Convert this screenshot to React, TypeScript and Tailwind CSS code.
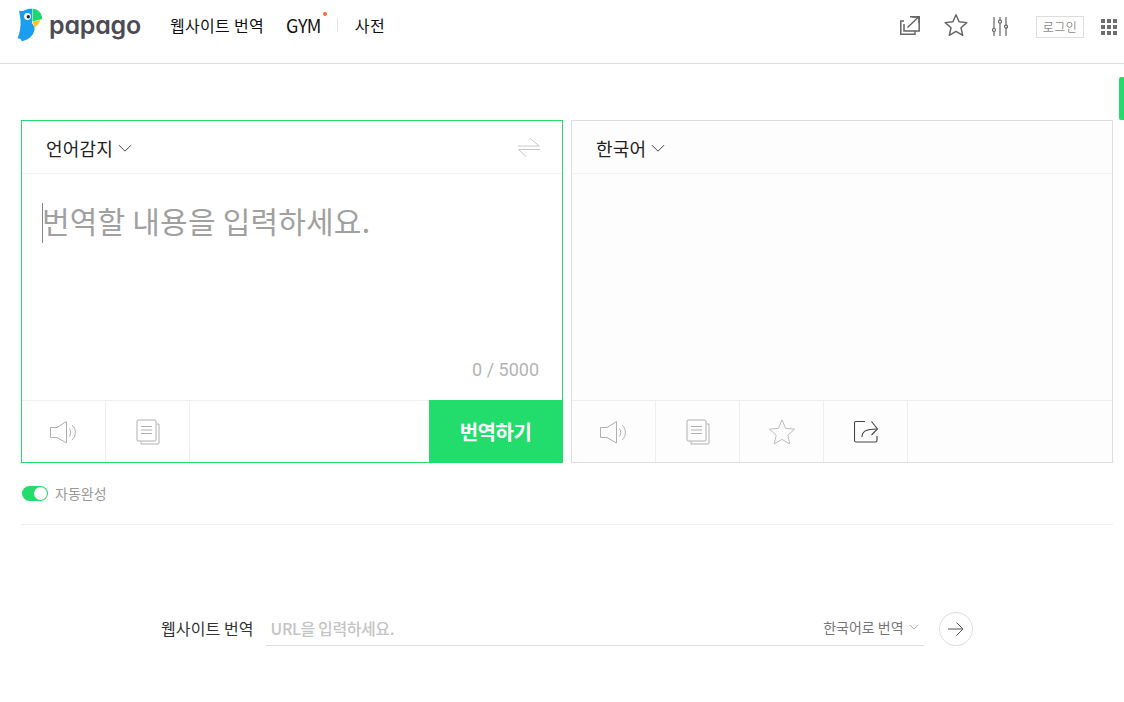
import React from 'react';

const KR = 'font-["Noto_Sans_CJK_KR","Noto_Sans",sans-serif]';

const Logo = () => (
  <svg width="26" height="34" viewBox="0 0 26 34" className="shrink-0">
    <path d="M7 2.5 C9.5 1 13 0.6 15 0.8 L15 15 L17.5 19 C18 26 13 31.5 4.5 33.5 C5 31.5 3.5 30 0.5 30.5 C3 24 4 18 3.5 12 C3 9 2.5 5 2 2.5 C3.5 3.3 5.5 3.3 7 2.5 Z" fill="#1b9df0" />
    <path d="M15.5 0.8 C21 1 25 5 25.2 11 L15.5 13.5 Z" fill="#1fd66f" />
    <path d="M15.5 13.8 L23.5 12 C22.5 15 20 18 17.5 19.5 Z" fill="#fcc419" />
    <circle cx="10.5" cy="8.5" r="3.4" fill="#fff" />
    <circle cx="11.3" cy="8.7" r="1.7" fill="#1d2a3a" />
  </svg>
);

const Speaker = () => (
  <svg width="30" height="26" viewBox="0 0 30 26" fill="none" stroke="#b0b0b0" strokeWidth="1">
    <path d="M1.5 8.5 H8 L17.5 2.5 V24 L8 18.5 H1.5 Z" />
    <path d="M20.5 9.5 C22 11.5 22 15.5 20.5 17.5" />
    <path d="M23 6 C27.5 9.5 27.5 17.5 23 21" />
  </svg>
);

const Copy = () => (
  <svg width="24" height="26" viewBox="0 0 24 26" fill="none" stroke="#b0b0b0" strokeWidth="1">
    <rect x="1" y="1" width="19" height="21" rx="1" />
    <path d="M20.5 5 H23 V24 A1 1 0 0 1 22 25 H5 V22.5" />
    <path d="M5 7.5 H16 M5 11 H16 M5 14.5 H16" />
  </svg>
);

const Star = ({ color = '#bdbdbd', size = 28, width = 1 }: { color?: string; size?: number; width?: number }) => (
  <svg width={size} height={size} viewBox="0 0 28 28" fill="none" stroke={color} strokeWidth={width} strokeLinejoin="round">
    <path d="M14 2 L17.6 10.3 L26.6 11.2 L19.8 17.2 L21.8 26 L14 21.4 L6.2 26 L8.2 17.2 L1.4 11.2 L10.4 10.3 Z" />
  </svg>
);

const Share = () => (
  <svg className="ml-[1px]" width="24" height="23" viewBox="0 0 24 23" fill="none" stroke="#444" strokeWidth="1.1">
    <path d="M11 1.5 H2 A1.5 1.5 0 0 0 0.5 3 V20.5 A1.5 1.5 0 0 0 2 22 H21.5 A1.5 1.5 0 0 0 23 20.5 V16" />
    <path d="M8 17 C8 12 11 9 23 9" />
    <path d="M17.5 1.5 L23.5 9 L17.5 15" />
  </svg>
);

const Chevron = ({ w = 14, color = '#444' }: { w?: number; color?: string }) => (
  <svg width={w} height={w * 0.6} viewBox="0 0 14 8" fill="none" stroke={color} strokeWidth="1">
    <path d="M1 1 L7 7 L13 1" />
  </svg>
);

const ActionCell = ({ children }: { children: React.ReactNode }) => (
  <div className="flex h-full w-[84px] items-center justify-center border-r border-[#eeeeee]">{children}</div>
);

export default function App() {
  return (
    <div className={`relative h-[702px] w-[1124px] overflow-hidden bg-white ${KR}`}>
      {/* Header */}
      <header className="flex h-[64px] items-center border-b border-[#dddddd] pb-[13px] pl-[17px] pr-[7px]">
        <Logo />
        <span className="ml-[6px] font-['Inter',sans-serif] text-[25px] font-semibold leading-none tracking-[-0.2px] text-[#4b4b55] [font-feature-settings:'cv11']">papago</span>
        <nav className="ml-[29px] flex items-center text-[16px] tracking-[0.3px] text-[#111111]">
          <span>웹사이트 번역</span>
          <span className="relative ml-[22px] text-[18px] leading-[24px] tracking-[-0.6px]">
            GYM
            <i className="absolute right-[-6px] top-[-1px] h-[4px] w-[4px] rounded-full bg-[#ff6b3d]" />
          </span>
          <i className="ml-[16px] h-[14px] w-px bg-[#e5e5e5]" />
          <span className="ml-[17px] text-[16px]">사전</span>
        </nav>
        <div className="ml-auto flex items-center">
          <svg width="20" height="19" viewBox="0 0 20 19" fill="none" stroke="#666" strokeWidth="1.5">
            <path d="M4 5 H0.8 V18.2 H15 V15" />
            <path d="M4 8 V15 H19.2 V0.8 H10" />
            <path d="M7.5 11.5 L18 1.5 M12.5 1 H19 V7" />
          </svg>
          <div className="ml-[24px]">
            <Star color="#666" size={24} width={1.7} />
          </div>
          <svg className="ml-[24px] mt-[2px]" width="16" height="19" viewBox="0 0 16 19" fill="none" stroke="#666" strokeWidth="1.2">
            <path d="M2 0 V19 M8 0 V19 M14 0 V19" />
            <circle cx="2" cy="13" r="1.5" fill="#fff" />
            <circle cx="8" cy="4.7" r="1.5" fill="#fff" />
            <circle cx="14" cy="9.6" r="1.5" fill="#fff" />
          </svg>
          <span className="ml-[28px] mt-[4px] flex h-[22px] w-[48px] items-center justify-center border border-[#dddddd] text-[12px] font-light leading-none tracking-[0.5px] text-[#555555]">로그인</span>
          <div className="ml-[17px] mt-[4px] grid grid-cols-3 gap-[2px]">
            {Array.from({ length: 9 }).map((_, i) => (
              <i key={i} className="h-[4px] w-[4px] bg-[#6f6f6f]" />
            ))}
          </div>
        </div>
      </header>

      {/* Scroll indicator */}
      <div className="absolute right-0 top-[77px] h-[43px] w-[5px] rounded-l-[2px] bg-[#22dd6c]" />

      <main className="px-[21px] pr-[11px] pt-[56px]">
        <div className="flex gap-[8px]">
          {/* Source panel */}
          <section className="flex h-[343px] w-[542px] flex-col border border-[#22dd6c] bg-white">
            <div className="flex h-[53px] items-center justify-between border-b border-[#f3f3f3] pl-[24px] pr-[22px]">
              <div className="flex items-center gap-[5px] pt-[3px] text-[18px] tracking-[0.2px] text-[#222222]">
                언어감지
                <Chevron />
              </div>
              <svg width="22" height="19" viewBox="0 0 22 19" fill="none" stroke="#c8c8c8" strokeWidth="1">
                <path d="M0 8 H21.5 L12 0.5" />
                <path d="M22 11.5 H0.5 L8 18.5" />
              </svg>
            </div>
            <div className="relative flex-1">
              <i className="absolute left-[20px] top-[29px] h-[40px] w-px bg-[#888888]" />
              <p className="pl-[20px] pt-[25px] text-[30px] leading-[42px] tracking-[0.2px] text-[#a0a0a0]">번역할 내용을 입력하세요.</p>
              <span className="absolute bottom-[21px] right-[23px] font-['Roboto',sans-serif] text-[18px] leading-none text-[#b4b4b4]">0 / 5000</span>
            </div>
            <div className="flex h-[62px] border-t border-[#f0f0f0]">
              <ActionCell><Speaker /></ActionCell>
              <ActionCell><Copy /></ActionCell>
              <button className="ml-auto my-[-1px] flex h-[63px] w-[133px] items-center justify-center bg-[#22dd6c] text-[20px] font-bold tracking-[-0.5px] text-white">번역하기</button>
            </div>
          </section>

          {/* Target panel */}
          <section className="flex h-[343px] w-[542px] flex-col border border-[#dddddd] bg-[#fdfdfd]">
            <div className="flex h-[53px] items-center border-b border-[#f3f3f3] pl-[24px]">
              <div className="flex items-center gap-[5px] pt-[3px] text-[18px] tracking-[0.2px] text-[#222222]">
                한국어
                <Chevron />
              </div>
            </div>
            <div className="flex-1" />
            <div className="flex h-[62px] border-t border-[#eeeeee]">
              <ActionCell><Speaker /></ActionCell>
              <ActionCell><Copy /></ActionCell>
              <ActionCell><Star /></ActionCell>
              <ActionCell><Share /></ActionCell>
            </div>
          </section>
        </div>

        {/* Autocomplete toggle */}
        <div className="flex h-[62px] items-center gap-[7px] border-b border-[#f0f0f0] pl-px">
          <div className="relative h-[15px] w-[26px] rounded-full bg-[#22dd6c]">
            <i className="absolute right-[1px] top-[1px] h-[13px] w-[13px] rounded-full bg-white" />
          </div>
          <span className="text-[14px] text-[#999999]">자동완성</span>
        </div>

        {/* Website translate */}
        <div className="mt-[86px] flex items-center pl-[140px]">
          <span className="pb-[2px] text-[16px] tracking-[0.1px] text-[#333333]">웹사이트 번역</span>
          <div className="ml-[12px] flex h-[35px] w-[658px] items-center justify-between border-b border-[#dddddd] pl-[5px] pr-[5px]">
            <span className="text-[16px] font-medium tracking-[-0.4px] text-[#c4c4c4]">URL을 입력하세요.</span>
            <span className="flex items-center gap-[5px] pb-[2px] text-[14px] text-[#777777]">
              한국어로 번역
              <Chevron w={10} color="#888" />
            </span>
          </div>
          <div className="ml-[15px] flex h-[34px] w-[34px] items-center justify-center rounded-full border border-[#dddddd]">
            <svg width="16" height="14" viewBox="0 0 16 14" fill="none" stroke="#555" strokeWidth="1">
              <path d="M0 7 H15 M8.5 0.5 L15 7 L8.5 13.5" />
            </svg>
          </div>
        </div>
      </main>
    </div>
  );
}
